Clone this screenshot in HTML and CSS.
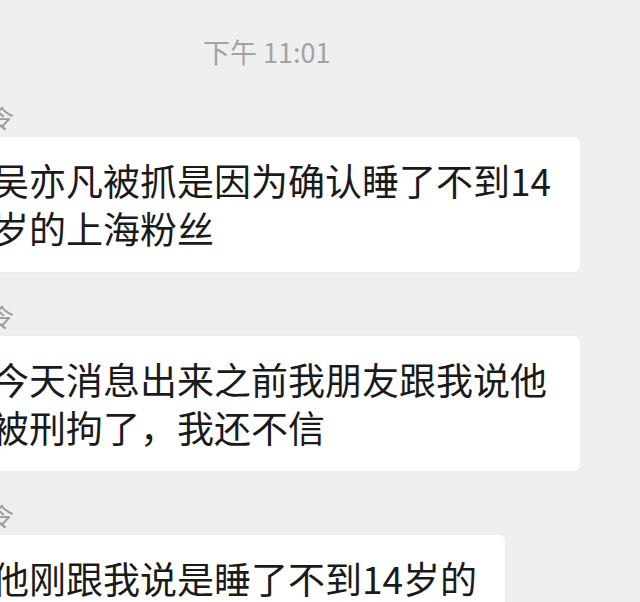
FILE: index.html
```html
<!DOCTYPE html>
<html lang="zh-CN">
<head>
    <meta charset="UTF-8">
    <meta name="viewport" content="width=device-width, initial-scale=1.0">
    <title>聊天记录</title>
    <link rel="stylesheet" href="styles.css">
</head>
<body>
    <div class="chat">
        <div class="time">下午 11:01</div>

        <div class="msg">
            <div class="name">令</div>
            <div class="bubble">吴亦凡被抓是因为确认睡了不到14岁的上海粉丝</div>
        </div>

        <div class="msg">
            <div class="name">令</div>
            <div class="bubble">今天消息出来之前我朋友跟我说他被刑拘了，我还不信</div>
        </div>

        <div class="msg">
            <div class="name">令</div>
            <div class="bubble">他刚跟我说是睡了不到14岁的</div>
        </div>
    </div>
</body>
</html>
```

FILE: styles.css
```css
html, body {
    margin: 0;
    height: 602px;
    overflow: hidden;
}
body {
    background-color: #efefef;
    font-family: "Noto Sans CJK SC", "Noto Sans", sans-serif;
    color: #1a1a1a;
}
.chat {
    display: flex;
    flex-direction: column;
    margin-left: -40px;
}
.time {
    padding: 35px 0 0 243px;
    font-size: 27px;
    line-height: 34px;
    color: #a3a3a3;
}
.msg {
    display: flex;
    flex-direction: column;
    align-items: flex-start;
    margin-top: 29px;
}
.time + .msg {
    margin-top: 33px;
}
.name {
    padding-left: 29px;
    font-size: 25px;
    line-height: 30px;
    color: #9c9c9c;
    margin-bottom: 5px;
}
.bubble {
    box-sizing: border-box;
    max-width: 620px;
    padding: 19px 28px 20px 32px;
    font-size: 37px;
    line-height: 48px;
    background-color: #fff;
    border-radius: 6px;
    box-shadow: 0 0 2px rgba(0, 0, 0, 0.06);
}
```
